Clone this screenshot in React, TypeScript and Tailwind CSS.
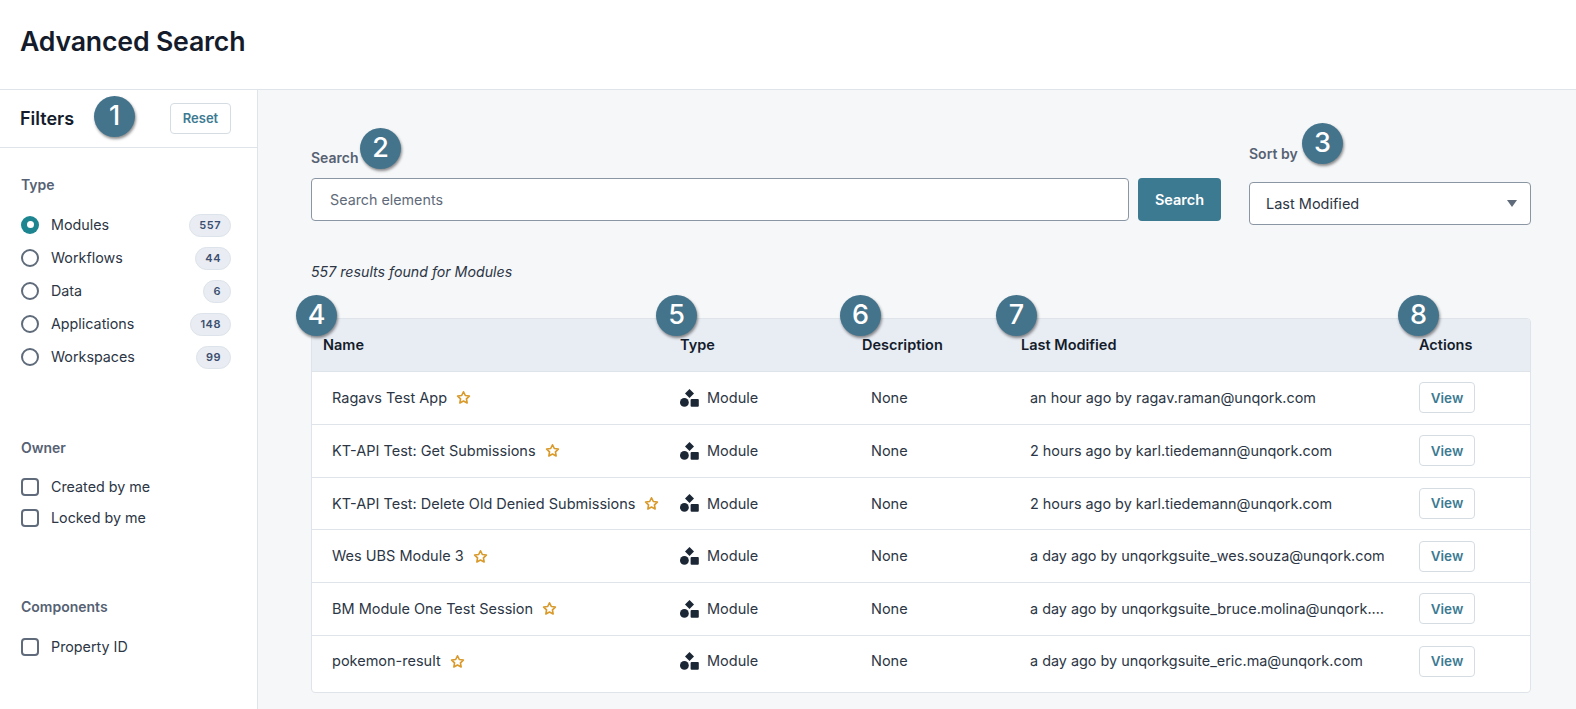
const types = [
  { label: "Modules", count: 557, on: true },
  { label: "Workflows", count: 44 },
  { label: "Data", count: 6 },
  { label: "Applications", count: 148 },
  { label: "Workspaces", count: 99 },
];

const rows = [
  { name: "Ragavs Test App", when: "an hour ago by ragav.raman@unqork.com" },
  { name: "KT-API Test: Get Submissions", when: "2 hours ago by karl.tiedemann@unqork.com" },
  { name: "KT-API Test: Delete Old Denied Submissions", when: "2 hours ago by karl.tiedemann@unqork.com" },
  { name: "Wes UBS Module 3", when: "a day ago by unqorkgsuite_wes.souza@unqork.com" },
  { name: "BM Module One Test Session", when: "a day ago by unqorkgsuite_bruce.molina@unqork.com" },
  { name: "pokemon-result", when: "a day ago by unqorkgsuite_eric.ma@unqork.com" },
];

function Marker({ n, className }: { n: number; className: string }) {
  return (
    <div className={`absolute z-10 flex h-[41px] w-[41px] items-center justify-center rounded-full bg-[#44748c] text-[27px] font-medium text-white shadow-[1px_2px_3px_rgba(0,0,0,0.45)] ${className}`}>
      {n}
    </div>
  );
}

function ModuleIcon() {
  return (
    <svg width="19" height="18" viewBox="0 0 19 18" className="shrink-0 fill-[#1c2736]">
      <path d="M9.5 0 L14 4.5 L9.5 9 L5 4.5 Z" />
      <circle cx="4.4" cy="13.4" r="4.4" />
      <rect x="10.6" y="10" width="8.2" height="7.8" rx="1" />
    </svg>
  );
}

function Star() {
  return (
    <svg width="15" height="15" viewBox="0 0 24 24" fill="none" stroke="#d99a2b" strokeWidth="2.6" strokeLinejoin="round">
      <path d="M12 2.8l2.9 6 6.5.9-4.7 4.6 1.1 6.5-5.8-3.1-5.8 3.1 1.1-6.5-4.7-4.6 6.5-.9z" />
    </svg>
  );
}

function Check({ label }: { label: string }) {
  return (
    <div className="flex h-[31px] items-center">
      <span className="h-[18px] w-[18px] rounded-[4px] border-2 border-[#5f6b7a] bg-white" />
      <span className="ml-[12px] text-[14.3px] text-[#2c3645]">{label}</span>
    </div>
  );
}

export default function App() {
  return (
    <div className="relative flex h-screen flex-col overflow-hidden bg-white font-['Inter',sans-serif] text-[#1c2736]">
      <header className="flex h-[90px] shrink-0 items-center border-b border-[#dfe4ea] pb-[6px] pl-[20px]">
        <h1 className="text-[26.7px] font-semibold tracking-[-0.2px] text-[#141c2b]">Advanced Search</h1>
      </header>

      <div className="flex min-h-0 flex-1">
        <aside className="w-[258px] shrink-0 border-r border-[#dfe4ea]">
          <div className="flex h-[58px] items-center justify-between border-b border-[#dfe4ea] pl-[20px] pr-[26px]">
            <span className="text-[18px] font-semibold text-[#141c2b]">Filters</span>
            <button className="h-[31px] w-[61px] rounded-[4px] border border-[#d5dde3] bg-white text-[13px] font-semibold text-[#3c7a92]">Reset</button>
          </div>

          <div className="pl-[21px] pr-[26px] pt-[27px]">
            <div className="text-[14px] font-semibold leading-5 text-[#566273]">Type</div>
            <div className="mt-[13px]">
              {types.map((t) => (
                <div key={t.label} className="flex h-[33px] items-center">
                  {t.on ? (
                    <span className="flex h-[18px] w-[18px] items-center justify-center rounded-full bg-[#1c8590]">
                      <span className="h-[7px] w-[7px] rounded-full bg-white" />
                    </span>
                  ) : (
                    <span className="h-[18px] w-[18px] rounded-full border-2 border-[#5f6b7a]" />
                  )}
                  <span className="ml-[12px] flex-1 text-[14.3px] text-[#2c3645]">{t.label}</span>
                  <span className="mt-[1px] flex h-[23px] items-center rounded-full border border-[#dde3ea] bg-[#e9edf3] px-[9px] text-[11px] font-semibold tracking-[0.5px] text-[#3d4f70]">
                    {t.count}
                  </span>
                </div>
              ))}
            </div>

            <div className="mt-[65px] text-[14px] font-semibold leading-5 text-[#566273]">Owner</div>
            <div className="mt-[13px]">
              <Check label="Created by me" />
              <Check label="Locked by me" />
            </div>

            <div className="mt-[64px] text-[14px] font-semibold leading-5 text-[#566273]">Components</div>
            <div className="mt-[14px]">
              <Check label="Property ID" />
            </div>
          </div>
        </aside>

        <main className="min-w-0 flex-1 bg-[#f6f7f9] pl-[53px] pr-[45px] pt-[58px]">
          <div className="flex items-start gap-[28px]">
            <div className="min-w-0 flex-1">
              <div className="text-[14px] font-semibold leading-5 text-[#566273]">Search</div>
              <div className="mt-[10px] flex gap-[9px]">
                <input
                  placeholder="Search elements"
                  className="h-[43px] min-w-0 flex-1 rounded-[4px] border border-[#8a96a3] bg-white px-[18px] text-[14.3px] placeholder:text-[#5f6b7a]"
                />
                <button className="h-[43px] w-[83px] rounded-[4px] bg-[#3c7a92] text-[14.5px] font-semibold text-white">Search</button>
              </div>
            </div>
            <div className="-mt-[4px] w-[282px] shrink-0">
              <div className="text-[14px] font-semibold leading-5 text-[#566273]">Sort by</div>
              <div className="mt-[18px] flex h-[43px] items-center justify-between rounded-[4px] border border-[#8a96a3] bg-white pl-[16px] pr-[13px] text-[14.5px] text-[#2c3645]">
                <span>Last Modified</span>
                <span className="h-0 w-0 border-x-[5px] border-t-[7px] border-x-transparent border-t-[#5f6b7a]" />
              </div>
            </div>
          </div>

          <p className="mt-[37px] text-[14.2px] italic leading-5 text-[#2c3645]">557 results found for Modules</p>

          <div className="mt-[36px] overflow-hidden rounded-[4px] border border-[#dfe4ea] bg-white">
            <div className="grid h-[53px] grid-cols-[368px_182px_159px_398px_1fr] items-center border-b border-[#dfe4ea] bg-[#e8ecf3] text-[14.5px] font-semibold text-[#141c2b]">
              <div className="pl-[11px]">Name</div>
              <div>Type</div>
              <div>Description</div>
              <div>Last Modified</div>
              <div>Actions</div>
            </div>
            {rows.map((r, i) => (
              <div
                key={r.name}
                className={`grid grid-cols-[368px_182px_159px_398px_1fr] items-center text-[14.5px] text-[#2c3645] ${i < rows.length - 1 ? "h-[52.75px] border-b border-[#dfe4ea]" : "h-[56px] pb-[5px]"}`}
              >
                <div className="flex items-center gap-[9px] pl-[20px]">
                  <span className="whitespace-nowrap">{r.name}</span>
                  <Star />
                </div>
                <div className="flex items-center gap-[8px]">
                  <ModuleIcon />
                  <span>Module</span>
                </div>
                <div className="pl-[9px]">None</div>
                <div className="min-w-0 pl-[9px] pr-[30px] text-[14.4px]">
                  <div className="truncate">{r.when}</div>
                </div>
                <div>
                  <button className="h-[31px] w-[56px] rounded-[4px] border border-[#d5dde3] bg-white text-[13.5px] font-semibold text-[#3c7a92]">View</button>
                </div>
              </div>
            ))}
          </div>
        </main>
      </div>

      <Marker n={1} className="left-[94px] top-[96px]" />
      <Marker n={2} className="left-[360px] top-[128px]" />
      <Marker n={3} className="left-[1302px] top-[123px]" />
      <Marker n={4} className="left-[296px] top-[295px]" />
      <Marker n={5} className="left-[656px] top-[295px]" />
      <Marker n={6} className="left-[840px] top-[295px]" />
      <Marker n={7} className="left-[996px] top-[295px]" />
      <Marker n={8} className="left-[1398px] top-[295px]" />
    </div>
  );
}
